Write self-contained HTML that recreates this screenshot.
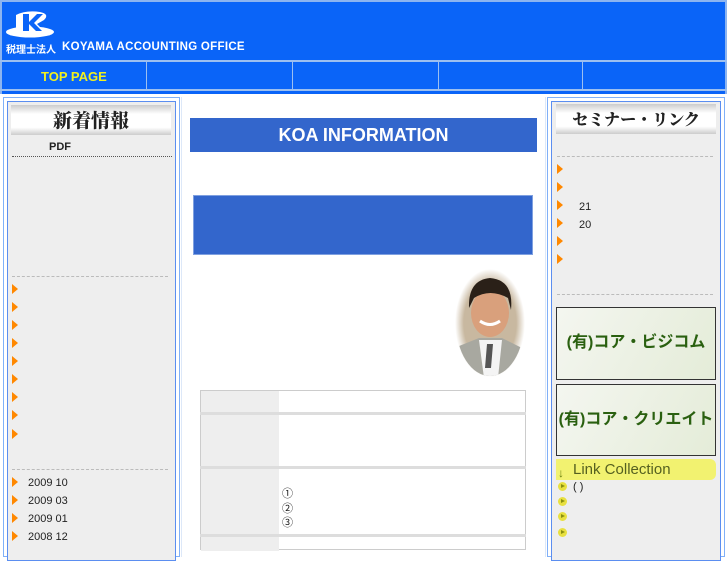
<!DOCTYPE html>
<html><head><meta charset="utf-8"><style>
*{margin:0;padding:0;box-sizing:border-box}
body{width:727px;height:545px;overflow:hidden;background:#fff;font-family:"Liberation Sans","Noto Sans CJK JP",sans-serif;position:relative}
.a{position:absolute}
.tri{position:absolute;width:0;height:0;border-top:5px solid transparent;border-bottom:5px solid transparent;border-left:6px solid #f80}
.t{position:absolute;font-size:11px;color:#222}
.yb{position:absolute;width:9px;height:9px;border-radius:50%;background:#e8e040}
.yb:after{content:"";position:absolute;left:3px;top:2px;border-top:2.5px solid transparent;border-bottom:2.5px solid transparent;border-left:4px solid #8a9010}
</style></head><body>
<div class="a" style="left:0;top:0;width:727px;height:94px;background:#0a64f8"></div>
<div class="a" style="left:0;top:0;width:727px;height:2px;background:#8cb4f0"></div>
<div class="a" style="left:0;top:0;width:2px;height:94px;background:#8cb4f0"></div>
<div class="a" style="left:725px;top:0;width:2px;height:94px;background:#8cb4f0"></div>
<!-- logo -->
<svg class="a" style="left:4px;top:10px" width="52" height="28" viewBox="0 0 52 28">
<ellipse cx="26" cy="22" rx="24" ry="5.5" fill="#fff"/>
<path d="M12 5 Q22 0 36 2 Q46 4 40 10 L33 14 L41 22 L12 22 Z" fill="#fff"/>
<path d="M19 4 L25 4 L25 12 L33 4 L39 4 L30 13 L38 21 L32 21 L25 14 L25 21 L19 21 Z" fill="#0a64f8"/>
</svg>
<div class="a" style="left:6px;top:41px;font-size:10px;color:#fff;font-weight:bold">税理士法人</div>
<div class="a" style="left:62px;top:41px;font-size:11.5px;color:#fff;font-weight:bold;letter-spacing:0.3px">KOYAMA ACCOUNTING OFFICE</div>
<div class="a" style="left:0;top:60px;width:727px;height:2px;background:#9cbff0"></div>
<div class="a" style="left:0;top:89px;width:727px;height:2px;background:#9cbff0"></div>
<div class="a" style="left:146px;top:62px;width:1px;height:27px;background:#9cbff0"></div>
<div class="a" style="left:292px;top:62px;width:1px;height:27px;background:#9cbff0"></div>
<div class="a" style="left:438px;top:62px;width:1px;height:27px;background:#9cbff0"></div>
<div class="a" style="left:582px;top:62px;width:1px;height:27px;background:#9cbff0"></div>
<div class="a" style="left:41px;top:69px;font-size:13px;color:#f0f020;font-weight:bold">TOP PAGE</div>
<!-- left col -->
<div class="a" style="left:3px;top:97px;width:177px;height:460px;border:1px solid #80b0f8"></div>
<div class="a" style="left:7px;top:101px;width:169px;height:460px;border:1px solid #5b8ef0;background:#eee"></div>
<div class="a" style="left:11px;top:105px;width:160px;height:30px;background:linear-gradient(#ccc,#fff 30%,#fff 75%,#ccc)"></div>
<div class="a" style="left:11px;top:106px;width:160px;text-align:center;font-family:'Noto Serif CJK SC',serif;font-weight:900;font-size:19px;color:#222">新着情報</div>
<div class="a" style="left:49px;top:141px;font-size:11px;font-weight:bold;color:#222">PDF</div>
<div class="a" style="left:12px;top:156px;width:160px;border-top:1px dotted #555"></div>
<div class="a" style="left:12px;top:276px;width:156px;border-top:1px dashed #bbb"></div>
<div class="a" style="left:12px;top:469px;width:156px;border-top:1px dashed #bbb"></div>
<div class="tri" style="left:12px;top:284px"></div><div class="tri" style="left:12px;top:302px"></div><div class="tri" style="left:12px;top:320px"></div><div class="tri" style="left:12px;top:338px"></div><div class="tri" style="left:12px;top:356px"></div><div class="tri" style="left:12px;top:374px"></div><div class="tri" style="left:12px;top:392px"></div><div class="tri" style="left:12px;top:410px"></div><div class="tri" style="left:12px;top:429px"></div>
<div class="tri" style="left:12px;top:477px"></div><div class="tri" style="left:12px;top:495px"></div><div class="tri" style="left:12px;top:513px"></div><div class="tri" style="left:12px;top:531px"></div>
<div class="t" style="left:28px;top:477px">2009 10</div>
<div class="t" style="left:28px;top:495px">2009 03</div>
<div class="t" style="left:28px;top:513px">2009 01</div>
<div class="t" style="left:28px;top:531px">2008 12</div>
<!-- center -->
<div class="a" style="left:181px;top:97px;width:365px;height:460px;border-left:1px solid #dde8f8;border-right:1px solid #dde8f8"></div>
<div class="a" style="left:190px;top:118px;width:347px;height:34px;background:#3366cc;color:#fff;font-weight:bold;font-size:18px;text-align:center;line-height:34px">KOA INFORMATION</div>
<div class="a" style="left:193px;top:195px;width:340px;height:60px;background:#3366cc;border:1px solid #7fa0e0"></div>
<svg class="a" style="left:454px;top:268px" width="72" height="110" viewBox="0 0 72 110">
<defs><radialGradient id="g" cx="50%" cy="50%" r="50%"><stop offset="75%" stop-color="#c8b8a0"/><stop offset="100%" stop-color="#fff"/></radialGradient><clipPath id="c"><ellipse cx="36" cy="55" rx="34" ry="53"/></clipPath></defs>
<ellipse cx="36" cy="55" rx="35" ry="54" fill="url(#g)"/>
<g clip-path="url(#c)">
<path d="M0 80 L25 70 L48 70 L72 82 L72 110 L0 110Z" fill="#a8a8a0"/>
<path d="M25 72 L48 72 L44 110 L30 110Z" fill="#f4f4f4"/>
<path d="M33 76 L39 76 L37 100 L31 100Z" fill="#555"/>
<ellipse cx="36" cy="45" rx="19" ry="24" fill="#d9a07c"/>
<path d="M15 40 Q14 12 36 10 Q60 12 57 42 L54 30 Q36 20 20 30Z" fill="#2a2018"/>
<path d="M26 53 Q36 60 46 53" stroke="#fff" stroke-width="3" fill="none"/>
</g></svg>
<div class="a" style="left:200px;top:390px;width:326px;height:160px;border:1px solid #ccc;background:#fff"></div>
<div class="a" style="left:201px;top:391px;width:78px;height:160px;background:#eee"></div>
<div class="a" style="left:200px;top:412px;width:326px;height:3px;background:#ddd"></div>
<div class="a" style="left:200px;top:466px;width:326px;height:3px;background:#ddd"></div>
<div class="a" style="left:200px;top:534px;width:326px;height:3px;background:#ddd"></div>
<div class="t" style="left:282px;top:487px;line-height:14.5px">①<br>②<br>③</div>
<!-- right col -->
<div class="a" style="left:547px;top:97px;width:178px;height:460px;border:1px solid #80b0f8"></div>
<div class="a" style="left:551px;top:101px;width:170px;height:460px;border:1px solid #5b8ef0;background:#eee"></div>
<div class="a" style="left:556px;top:104px;width:160px;height:30px;background:linear-gradient(#ccc,#fff 30%,#fff 75%,#ccc)"></div>
<div class="a" style="left:556px;top:107px;width:160px;text-align:center;font-family:'Noto Serif CJK SC',serif;font-weight:900;font-size:16px;color:#222">セミナー・リンク</div>
<div class="a" style="left:557px;top:156px;width:156px;border-top:1px dashed #bbb"></div>
<div class="a" style="left:557px;top:294px;width:156px;border-top:1px dashed #bbb"></div>
<div class="tri" style="left:557px;top:164px"></div><div class="tri" style="left:557px;top:182px"></div><div class="tri" style="left:557px;top:200px"></div><div class="tri" style="left:557px;top:218px"></div><div class="tri" style="left:557px;top:236px"></div><div class="tri" style="left:557px;top:254px"></div>
<div class="t" style="left:579px;top:201px">21</div>
<div class="t" style="left:579px;top:219px">20</div>
<div class="a" style="left:556px;top:307px;width:160px;height:73px;border:1px solid #333;background:linear-gradient(120deg,#f4f6f0,#e4ecd8);color:#2a6010;font-weight:bold;font-size:16px;text-align:center;line-height:70px">(有)コア・ビジコム</div>
<div class="a" style="left:556px;top:384px;width:160px;height:72px;border:1px solid #333;background:linear-gradient(120deg,#f4f6f0,#e4ecd8);color:#2a6010;font-weight:bold;font-size:16px;text-align:center;line-height:70px">(有)コア・クリエイト</div>
<div class="a" style="left:556px;top:459px;width:160px;height:21px;background:#f2f270;border-radius:0 6px 6px 0"></div>
<div class="a" style="left:573px;top:461px;font-size:15px;color:#556020">Link Collection</div>
<div class="a" style="left:558px;top:466px;font-size:12px;color:#6a8010;font-weight:bold">↓</div>
<div class="yb" style="left:558px;top:482px"></div>
<div class="yb" style="left:558px;top:497px"></div>
<div class="yb" style="left:558px;top:512px"></div>
<div class="yb" style="left:558px;top:528px"></div>
<div class="t" style="left:573px;top:481px">( )</div>
</body></html>
